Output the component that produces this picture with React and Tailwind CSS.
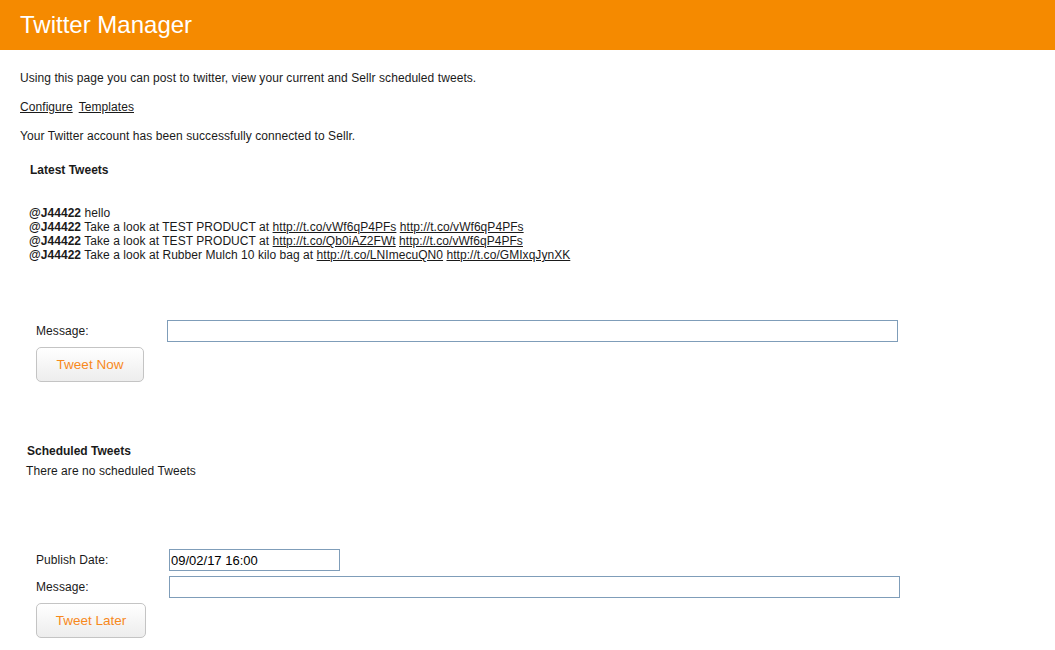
export default function App() {
  const tweets = [
    { text: 'hello', links: [] },
    { text: 'Take a look at TEST PRODUCT at ', links: ['http://t.co/vWf6qP4PFs', 'http://t.co/vWf6qP4PFs'] },
    { text: 'Take a look at TEST PRODUCT at ', links: ['http://t.co/Qb0iAZ2FWt', 'http://t.co/vWf6qP4PFs'] },
    { text: 'Take a look at Rubber Mulch 10 kilo bag at ', links: ['http://t.co/LNImecuQN0', 'http://t.co/GMIxqJynXK'] },
  ]

  const btn =
    'h-[35px] rounded-[5px] border border-[#c4c4c4] bg-gradient-to-b from-white to-[#ededed] text-[13.5px] tracking-normal text-[#f7891c]'

  return (
    <div className="min-h-[650px] bg-white text-[12px] leading-[14px] tracking-[0.07px] text-[#1a1a1a] font-['Liberation_Sans',Arial,sans-serif]">
      {/* header */}
      <div className="flex h-[50px] items-center bg-[#f58a00] px-5">
        <h1 className="text-[24px] leading-[28px] tracking-normal text-white">Twitter Manager</h1>
      </div>

      <div className="px-5">
        <p className="mt-[21px]">Using this page you can post to twitter, view your current and Sellr scheduled tweets.</p>
        <div className="mt-[15px] flex gap-[6px]">
          <a href="#" className="underline">Configure</a>
          <a href="#" className="underline">Templates</a>
        </div>
        <p className="mt-[15px]">Your Twitter account has been successfully connected to Sellr.</p>
      </div>

      {/* latest tweets */}
      <div className="mt-[20px] pl-[30px] font-bold tracking-normal">Latest Tweets</div>
      <div className="mt-[29px] pl-[29px] tracking-[0.05px]">
        {tweets.map((t, i) => (
          <div key={i}>
            <b>@J44422</b> {t.text}
            {t.links.map((l, j) => (
              <span key={j}>
                <a href="#" className="underline">{l}</a>{' '}
              </span>
            ))}
          </div>
        ))}
      </div>

      {/* tweet now */}
      <div className="mt-[58px] pl-[36px]">
        <div className="flex items-center">
          <label className="w-[131px]">Message:</label>
          <input className="h-[22px] w-[731px] border border-[#7f9db9] outline-none" />
        </div>
        <button className={`mt-[5px] w-[108px] ${btn}`}>Tweet Now</button>
      </div>

      {/* scheduled */}
      <div className="mt-[62px] pl-[27px] font-bold tracking-normal">Scheduled Tweets</div>
      <div className="mt-[6px] pl-[26px]">There are no scheduled Tweets</div>

      <div className="mt-[71px] pl-[36px]">
        <div className="flex items-center">
          <label className="w-[133px]">Publish Date:</label>
          <input
            defaultValue="09/02/17 16:00"
            className="h-[22px] w-[171px] border border-[#7f9db9] px-[1px] text-[13px] tracking-normal text-black outline-none"
          />
        </div>
        <div className="mt-[5px] flex items-center">
          <label className="w-[133px]">Message:</label>
          <input className="h-[22px] w-[731px] border border-[#7f9db9] outline-none" />
        </div>
        <button className={`mt-[5px] w-[110px] ${btn}`}>Tweet Later</button>
      </div>
    </div>
  )
}
